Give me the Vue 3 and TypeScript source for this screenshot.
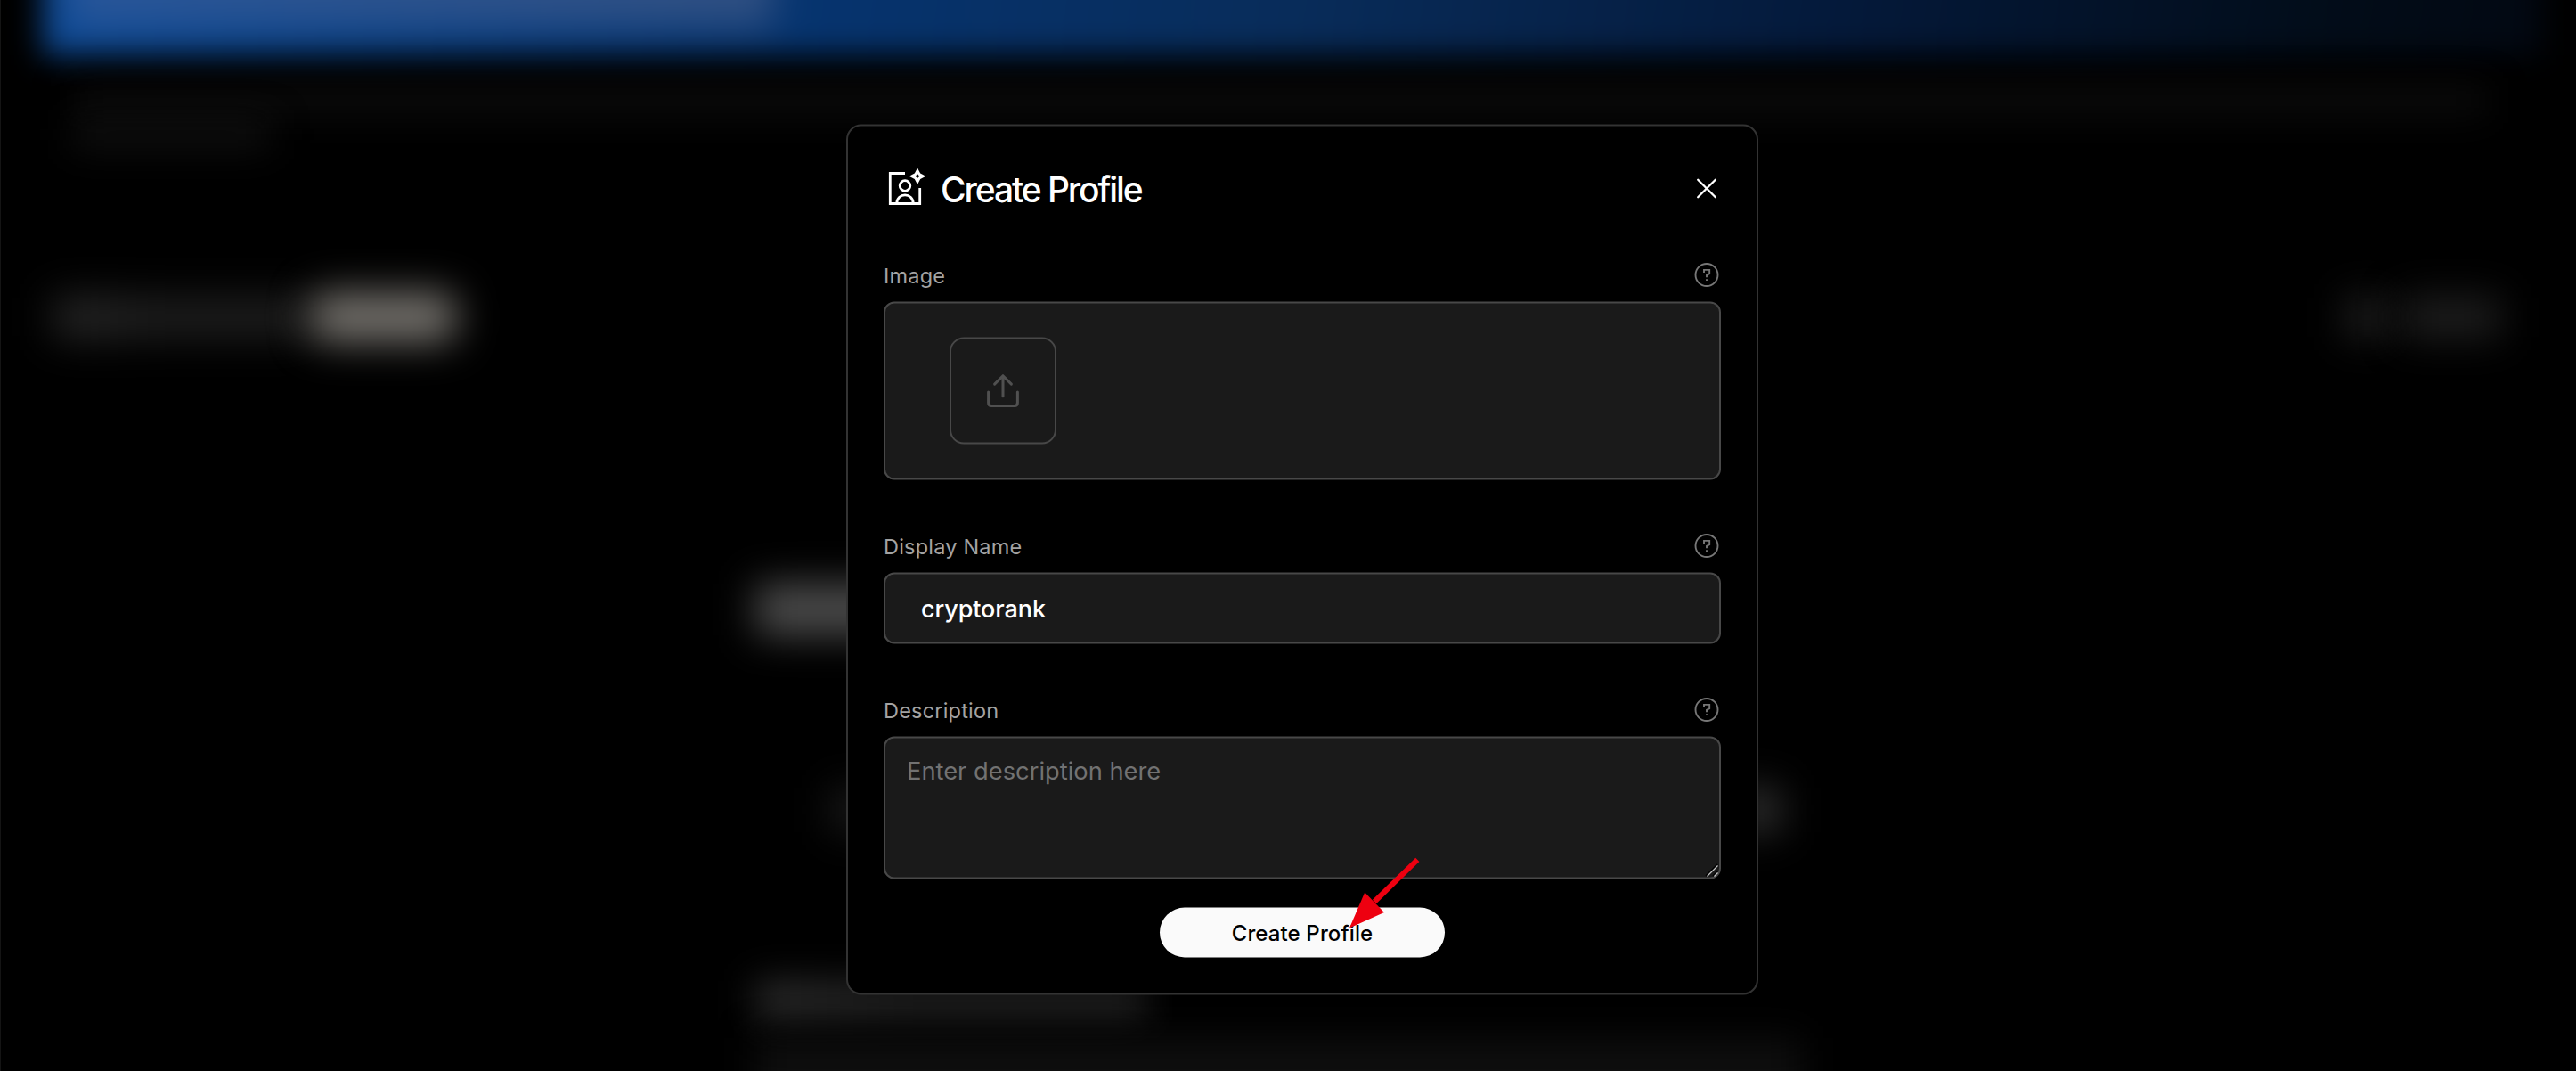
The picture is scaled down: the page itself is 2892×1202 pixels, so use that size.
<script setup lang="ts">
import { ref } from 'vue'

const displayName = ref<string>('cryptorank')
const description = ref<string>('')
</script>

<template>
  <div class="screen">
    <div class="page" aria-hidden="true">
      <div class="banner"><div class="banner-title"></div></div>
      <div class="intro">
        <div class="intro-line"></div>
        <div class="intro-line short"></div>
      </div>
      <div class="toolbar">
        <div class="tabs"></div>
        <div class="pill"></div>
        <div class="spacer"></div>
        <div class="tool small"></div>
        <div class="tool"></div>
      </div>
      <div class="content">
        <div class="headline"></div>
        <div class="card"><div class="card-dot"></div><div class="card-dot bright"></div></div>
        <div class="subhead"></div>
        <div class="copy"></div>
      </div>
    </div>

    <main class="modal">
      <header class="modal-header">
        <svg class="profile-icon" width="48" height="48" viewBox="0 0 48 48" fill="none" stroke="#fff" stroke-width="2.8">
          <path d="M22 7H5.3V41H38.7V23.5" />
          <circle cx="22" cy="21" r="5.8" />
          <path d="M12.7 41C12.7 35 17 31.4 22 31.4S31.3 35 31.3 41" />
          <path fill="#fff" stroke="none" fill-rule="evenodd" d="M36 .9L39.2 7L45.4 10.2L39.2 13.4L36 19.5L32.8 13.4L26.6 10.2L32.8 7ZM36 7.8L33.6 10.2L36 12.6L38.4 10.2Z" />
        </svg>
        <h1>Create Profile</h1>
        <svg class="close" width="32" height="32" viewBox="0 0 32 32" stroke="#fff" stroke-width="2.3" stroke-linecap="round">
          <path d="M6.2 6.2L25.8 25.8M25.8 6.2L6.2 25.8" />
        </svg>
      </header>

      <section class="field">
        <div class="label-row">
          <span class="label">Image</span>
          <svg class="help" width="32" height="32" viewBox="0 0 32 32">
            <circle cx="16" cy="16" r="12.5" /><path d="M13 13.6V10.4H19.2V14.6L16 16.4V18.8M16 20.8V22.6" />
          </svg>
        </div>
        <div class="box image-box">
          <div class="upload">
            <svg width="48" height="48" viewBox="0 0 48 48" fill="none" stroke="#505050" stroke-width="3" stroke-linecap="round" stroke-linejoin="round">
              <path d="M24 30.2V7.6M14.6 16.6L24 7.2L33.4 16.6M7.6 25.6V37.5Q7.6 41 11.1 41H36.9Q40.4 41 40.4 37.5V25.6" />
            </svg>
          </div>
        </div>
      </section>

      <section class="field">
        <div class="label-row">
          <span class="label">Display Name</span>
          <svg class="help" width="32" height="32" viewBox="0 0 32 32">
            <circle cx="16" cy="16" r="12.5" /><path d="M13 13.6V10.4H19.2V14.6L16 16.4V18.8M16 20.8V22.6" />
          </svg>
        </div>
        <input v-model="displayName" class="box name-input" type="text" spellcheck="false" />
      </section>

      <section class="field last">
        <div class="label-row">
          <span class="label">Description</span>
          <svg class="help" width="32" height="32" viewBox="0 0 32 32">
            <circle cx="16" cy="16" r="12.5" /><path d="M13 13.6V10.4H19.2V14.6L16 16.4V18.8M16 20.8V22.6" />
          </svg>
        </div>
        <div class="area-wrap">
          <textarea v-model="description" class="box desc-input" placeholder="Enter description here" spellcheck="false"></textarea>
          <svg class="grip" width="16" height="16" viewBox="0 0 16 16" fill="none">
            <path d="M1 14.5L14 1.5M9 14.5L14 9.5" stroke="#000" stroke-width="1.6" />
            <path d="M2.5 15L14.5 3M10.5 15L14.5 11" stroke="#c4c4c4" stroke-width="1.3" />
          </svg>
        </div>
      </section>

      <div class="actions">
        <button type="button">Create Profile</button>
        <svg class="pointer" width="84" height="84" viewBox="0 0 84 84">
          <path d="M33 53.5L81.3 6.3" stroke="#ee0010" stroke-width="6" />
          <path d="M5 83L22.2 43L44 65.5Z" fill="#ee0010" />
        </svg>
      </div>
    </main>
  </div>
</template>

<style>
html,
body {
  margin: 0;
  background: #000;
  overflow: hidden;
}
</style>

<style scoped>
* {
  box-sizing: border-box;
}
.screen {
  position: relative;
  width: 2892px;
  height: 1202px;
  overflow: hidden;
  background: #000;
  font-family: Inter, 'Liberation Sans', sans-serif;
}
.page {
  height: 1202px;
  overflow: hidden;
  border-left: 1px solid #141414;
}
.banner {
  height: 120px;
  margin: -58px 38px 0 47px;
  padding: 0 0 0 30px;
  background: linear-gradient(97deg, #0d4a96 0%, #06336d 32%, #082c5a 50%, #04193a 72%, #020c18 92%, #020812 100%);
  filter: blur(17px);
}
.banner-title {
  width: 790px;
  height: 88px;
  background: linear-gradient(90deg, rgba(88, 110, 165, 0.36), rgba(92, 108, 148, 0.48));
  filter: blur(12px);
}
.intro {
  padding: 38px 100px 0 80px;
}
.intro-line {
  height: 26px;
  margin-bottom: 11px;
  background: #0e0e0e;
  filter: blur(20px);
}
.intro-line.short {
  width: 222px;
  height: 28px;
  background: #121212;
}
.toolbar {
  display: flex;
  align-items: center;
  height: 60px;
  margin-top: 161px;
  padding: 0 84px 0 60px;
}
.tabs {
  width: 286px;
  height: 44px;
  background: linear-gradient(90deg, #2c2c2c, #202020 40%, #202020);
  filter: blur(23px);
}
.pill {
  width: 166px;
  height: 56px;
  border-radius: 20px;
  background: #74716c;
  filter: blur(22px);
}
.spacer {
  flex: 1;
}
.tool {
  width: 112px;
  height: 46px;
  background: #1e1e1e;
  filter: blur(22px);
}
.tool.small {
  width: 50px;
  margin-right: 14px;
}
.content {
  width: 1175px;
  margin: 269px auto 0 847px;
}
.headline {
  width: 240px;
  height: 58px;
  background: #4c4c4c;
  filter: blur(22px);
}
.card {
  display: flex;
  align-items: center;
  justify-content: space-between;
  height: 240px;
  margin-top: 76px;
  padding: 0 24px 0 84px;
}
.card-dot {
  width: 52px;
  height: 50px;
  background: #191919;
  filter: blur(22px);
}
.card-dot.bright {
  background: #303030;
}
.subhead {
  width: 440px;
  height: 44px;
  margin-top: 72px;
  background: linear-gradient(90deg, #2c2c2c, #202020 40%, #202020);
  filter: blur(20px);
}
.copy {
  height: 90px;
  margin-top: 20px;
  background: #0e0e0e;
  filter: blur(20px);
}

.modal {
  position: absolute;
  left: 950px;
  top: 140px;
  width: 1024px;
  height: 977px;
  padding: 40px;
  border: 2px solid #333;
  border-radius: 17px;
  background: #000;
  transform: translateY(-0.5px);
}
.modal-header {
  display: flex;
  align-items: center;
  height: 60px;
  margin-bottom: 52px;
}
.profile-icon {
  margin-left: 2px;
}
h1 {
  margin: 0 auto 0 14px;
  padding-top: 2px;
  color: #fff;
  font-size: 39px;
  font-weight: 450;
  line-height: 48px;
  letter-spacing: -2.1px;
}
.field {
  margin-bottom: 59px;
}
.field.last {
  margin-bottom: 32px;
}
.label-row {
  display: flex;
  align-items: center;
  justify-content: space-between;
  height: 30px;
  margin-bottom: 15px;
}
.label {
  padding-top: 2px;
  color: #a3a3a3;
  font-size: 23.5px;
  line-height: 30px;
  letter-spacing: 0.2px;
}
.help {
  fill: none;
  stroke: #777;
  stroke-width: 1.9;
}
.box {
  display: block;
  width: 940px;
  border: 2px solid #484848;
  border-radius: 12px;
  outline: none;
  background: #1a1a1a;
  font-family: inherit;
}
.image-box {
  height: 200px;
  padding: 38px 72px;
}
.upload {
  display: flex;
  align-items: center;
  justify-content: center;
  width: 120px;
  height: 120px;
  border: 2px solid #484848;
  border-radius: 16px;
}
.name-input {
  height: 80px;
  padding: 0 40px;
  color: #fff;
  font-size: 27px;
  font-weight: 500;
  letter-spacing: -0.1px;
}
.area-wrap {
  position: relative;
}
.desc-input {
  height: 160px;
  padding: 15px 24px;
  color: #fff;
  font-size: 27.3px;
  line-height: 44px;
  resize: none;
}
.desc-input::placeholder {
  color: #727272;
  opacity: 1;
}
.grip {
  position: absolute;
  right: 2px;
  bottom: 2px;
}
.actions {
  position: relative;
  display: flex;
  justify-content: center;
}
button {
  width: 320px;
  height: 56px;
  padding: 1px 0 0;
  border: 0;
  border-radius: 28px;
  background: #fafafa;
  color: #000;
  font-family: inherit;
  font-size: 24px;
  font-weight: 500;
  letter-spacing: 0.12px;
}
.pointer {
  position: absolute;
  left: 518px;
  top: -60px;
}
</style>
